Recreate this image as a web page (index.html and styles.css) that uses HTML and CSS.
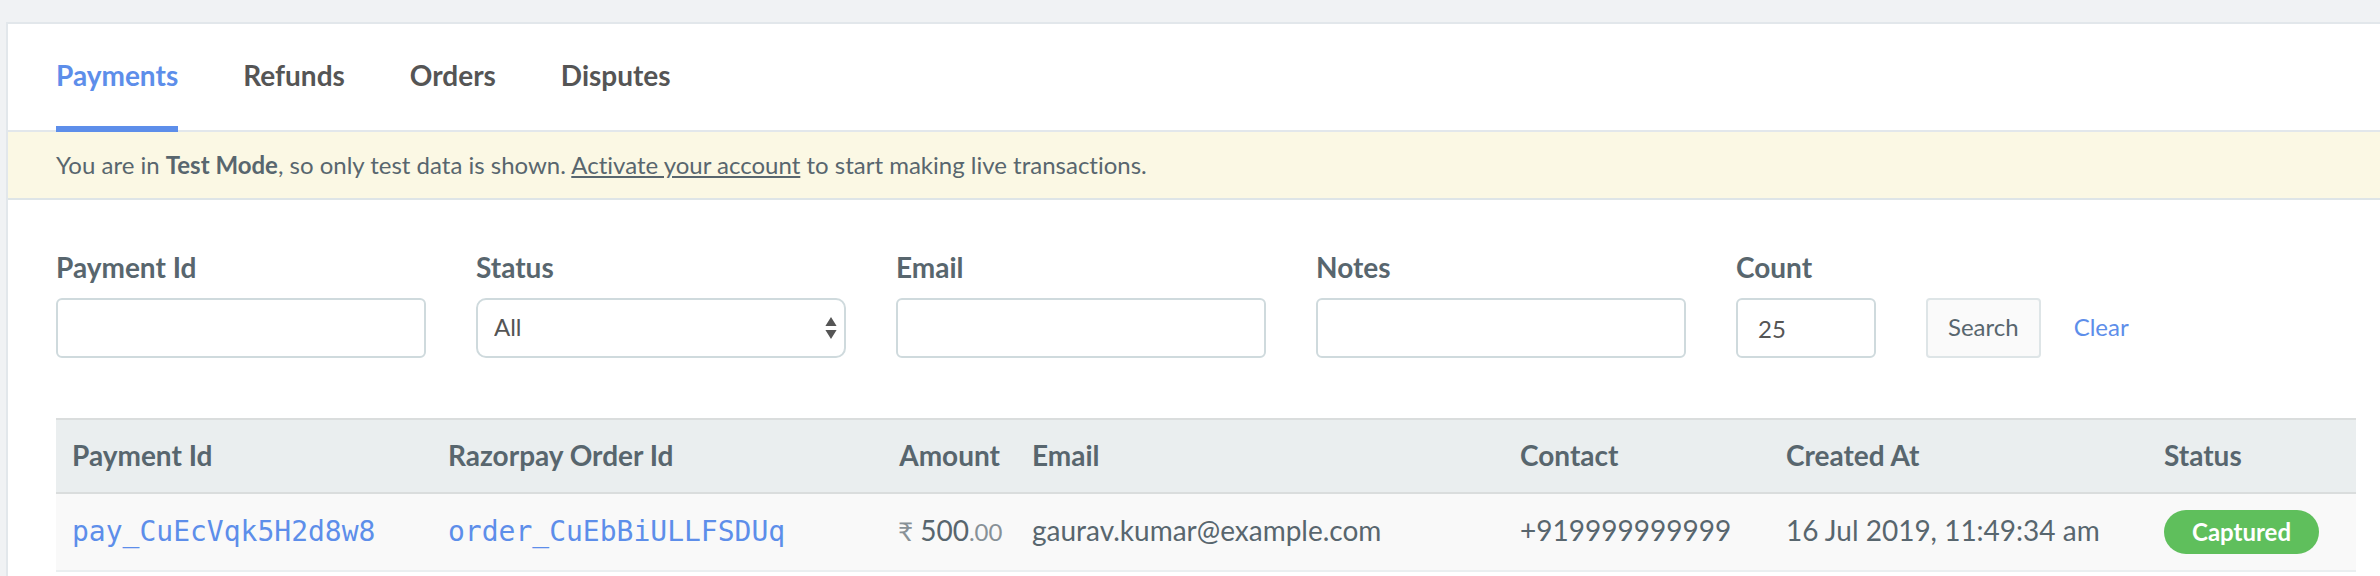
FILE: index.html
```html
<!DOCTYPE html>
<html lang="en">
<head>
<meta charset="utf-8">
<title>Payments</title>
<link rel="stylesheet" href="styles.css">
</head>
<body>
<main class="panel">
  <nav class="tabs">
    <a class="tab tab-active" href="#payments">Payments</a>
    <a class="tab" href="#refunds">Refunds</a>
    <a class="tab" href="#orders">Orders</a>
    <a class="tab" href="#disputes">Disputes</a>
  </nav>
  <p class="notice">You are in <b>Test Mode</b>, so only test data is shown. <a class="notice-link" href="#activate">Activate your account</a> to start making live transactions.</p>
  <form class="filters">
    <div class="field">
      <label class="label" for="payment-id">Payment Id</label>
      <input class="control" id="payment-id" type="text">
    </div>
    <div class="field">
      <label class="label" for="status">Status</label>
      <div class="select-wrap">
        <select class="control select" id="status"><option>All</option></select>
        <svg class="select-arrows" width="12" height="22" viewBox="0 0 12 22" aria-hidden="true"><path d="M6 0l5.6 9H.4zM6 22L.4 13h11.2z" fill="#555"/></svg>
      </div>
    </div>
    <div class="field">
      <label class="label" for="email">Email</label>
      <input class="control" id="email" type="text">
    </div>
    <div class="field">
      <label class="label" for="notes">Notes</label>
      <input class="control" id="notes" type="text">
    </div>
    <div class="field field-small">
      <label class="label" for="count">Count</label>
      <input class="control" id="count" type="text" value="25">
    </div>
    <div class="actions">
      <button class="search" type="button">Search</button>
      <a class="clear" href="#clear">Clear</a>
    </div>
  </form>
  <div class="table-wrap">
    <table class="payments">
      <colgroup>
        <col class="col-id"><col class="col-order"><col class="col-amount"><col class="col-email"><col class="col-contact"><col class="col-created"><col class="col-status">
      </colgroup>
      <thead>
        <tr><th>Payment Id</th><th>Razorpay Order Id</th><th class="amount">Amount</th><th>Email</th><th>Contact</th><th>Created At</th><th>Status</th></tr>
      </thead>
      <tbody>
        <tr>
          <td><a class="code" href="#payment">pay_CuEcVqk5H2d8w8</a></td>
          <td><a class="code" href="#order">order_CuEbBiULLFSDUq</a></td>
          <td class="amount"><span class="minor rupee">₹</span> 500<span class="minor">.00</span></td>
          <td>gaurav.kumar@example.com</td>
          <td>+919999999999</td>
          <td>16 Jul 2019, 11:49:34 am</td>
          <td class="status-cell"><span class="badge">Captured</span></td>
        </tr>
      </tbody>
    </table>
  </div>
</main>
</body>
</html>
```
FILE: styles.css
```css
* { box-sizing: border-box; }

body {
  margin: 0;
  padding: 22px 0 0 6px;
  min-height: 100vh;
  display: flex;
  flex-direction: column;
  background: #f0f2f4;
  color: #58666e;
  font-family: Lato, "Liberation Sans", sans-serif;
  font-size: 28px;
  font-variant-ligatures: no-common-ligatures;
  line-height: 40px;
}

a { color: #5d8eea; text-decoration: none; }

.panel {
  flex: 1;
  background: #fff;
  border: 2px solid #e2e7eb;
  border-width: 2px 0 0 2px;
}

.tabs {
  display: flex;
  gap: 65px;
  padding: 0 48px;
  border-bottom: 2px solid #e2e7eb;
}

.tab {
  margin-bottom: -2px;
  padding: 31px 0;
  border-bottom: 6px solid transparent;
  color: #555;
  font-weight: 700;
}

.tab-active { color: #5d8eea; border-color: #5d8eea; }

.notice {
  margin: 0;
  padding: 15px 48px;
  background: #fbf8e4;
  border-bottom: 2px solid #dee5e7;
  font-size: 24px;
  line-height: 36px;
}

.notice-link { color: inherit; text-decoration: underline; }

.filters {
  display: flex;
  align-items: flex-end;
  gap: 50px;
  padding: 47px 48px 60px;
}

.field {
  flex: 0 1 370px;
  min-width: 0;
  display: flex;
  flex-direction: column;
  gap: 11px;
}

.field-small { flex-basis: 140px; }

.label { font-weight: 700; }

.control {
  width: 100%;
  height: 60px;
  padding: 0 20px;
  border: 2px solid #cfdadd;
  border-radius: 6px;
  background: #fff;
  color: #555;
  font: inherit;
  font-size: 24px;
}

.select-wrap { position: relative; display: flex; }

.select {
  appearance: none;
  padding: 0 16px 2px;
  border-radius: 10px;
}

.select-arrows {
  position: absolute;
  top: 19px;
  right: 9px;
  pointer-events: none;
}

.actions { display: flex; align-items: center; gap: 33px; }

.search {
  height: 60px;
  padding: 0 20px 2px;
  border: 2px solid #dee5e7;
  border-radius: 4px;
  background: #fafafa;
  color: #58666e;
  font: inherit;
  font-size: 24px;
}

.clear { padding-bottom: 2px; font-size: 24px; }

.table-wrap { padding: 0 24px 0 48px; }

.payments {
  width: 100%;
  table-layout: fixed;
  border-collapse: separate;
  border-spacing: 0;
}

.col-id { width: 376px; }
.col-order { width: 450px; }
.col-amount { width: 134px; }
.col-email { width: 488px; }
.col-contact { width: 266px; }
.col-created { width: 378px; }
.col-status { width: 208px; }

th, td { text-align: left; white-space: nowrap; }

th {
  padding: 15px 16px 17px;
  background: #eaeeef;
  border-top: 2px solid #dadddd;
  border-bottom: 2px solid #dadddd;
}

td {
  height: 78px;
  padding: 14px 16px 18px;
  background: #f9f9f9;
  border-bottom: 2px solid #eaeff0;
}

.status-cell { padding: 16px; }

.amount { text-align: right; }

.code {
  font-family: "DejaVu Sans Mono", monospace;
  line-height: 1;
}

.minor {
  font-size: 24px;
  line-height: 1;
  opacity: 0.7;
}

.rupee { font-size: 26px; }

.badge {
  display: block;
  width: fit-content;
  padding: 0 28px;
  border-radius: 22px;
  background: #5fbf5c;
  color: #fff;
  font-size: 24px;
  font-weight: 700;
  line-height: 44px;
}
```
